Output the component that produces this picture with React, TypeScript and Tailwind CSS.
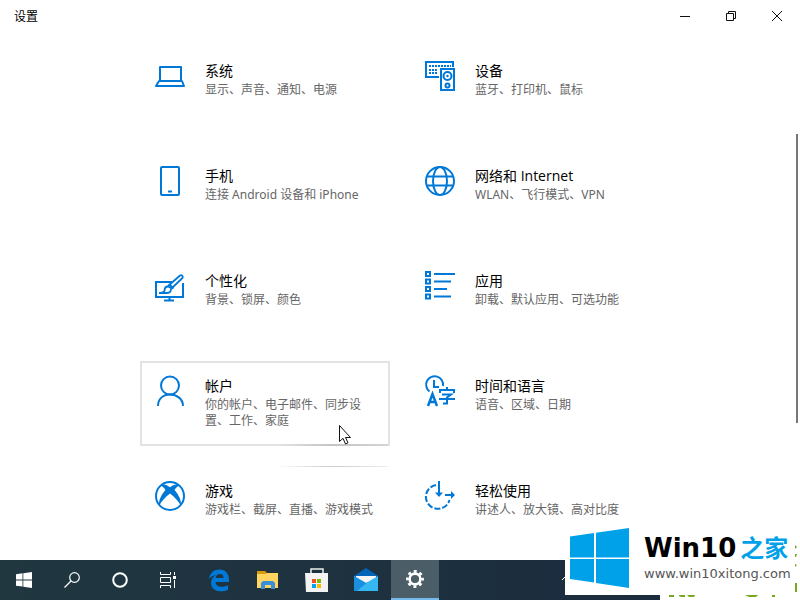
import { ReactNode } from "react";

interface Category {
  title: string;
  description: string;
  icon: ReactNode;
  active?: boolean;
}

function Icon({ children }: { children: ReactNode }) {
  return (
    <svg
      viewBox="0 0 30 30"
      className="size-[30px] shrink-0 overflow-visible"
      fill="none"
      stroke="#0078d7"
      strokeWidth="2"
      aria-hidden="true"
    >
      {children}
    </svg>
  );
}

const categories: Category[] = [
  {
    title: "系统",
    description: "显示、声音、通知、电源",
    icon: (
      <Icon>
        <path d="M5 20V6h21v14M4 20h23l2 5H1l3-5Z" strokeLinejoin="round" />
      </Icon>
    ),
  },
  {
    title: "设备",
    description: "蓝牙、打印机、鼠标",
    icon: (
      <Icon>
        <path d="M14 16H1V1h27v5" />
        <path d="M4 5h22M4 9h9M4 12h9" strokeDasharray="2 1" />
        <path d="M16 8h13v21H16z" />
        <circle cx="22.5" cy="15" r="4" />
        <circle cx="22.5" cy="15" r="1.2" fill="#0078d7" stroke="none" />
        <circle cx="22.5" cy="24.5" r="2" />
      </Icon>
    ),
  },
  {
    title: "手机",
    description: "连接 Android 设备和 iPhone",
    icon: (
      <Icon>
        <rect x="6" y="1" width="18" height="28" rx="1" />
        <path d="M13 25.5h4" />
      </Icon>
    ),
  },
  {
    title: "网络和 Internet",
    description: "WLAN、飞行模式、VPN",
    icon: (
      <Icon>
        <circle cx="15" cy="15" r="14" />
        <ellipse cx="15" cy="15" rx="7" ry="14" />
        <path d="M2 10.5h26M2 19.5h26" />
      </Icon>
    ),
  },
  {
    title: "个性化",
    description: "背景、锁屏、颜色",
    icon: (
      <Icon>
        <path d="M17 11H1v15h27V12M14.5 26v3M9 29.5h10" />
        <path
          d="M4 22h8c3 0 4.500-2 4-5l-3-1.500c-3 0-3.500 3-3.500 4.500-1 1.500-3 2-5.500 2Z"
          strokeWidth="1.800"
        />
        <path
          d="M13 15 25 4.500c1.500-1 3.500.5 2.500 2.500L16.500 17.500M14.500 13.500l4 4"
          strokeWidth="1.800"
        />
      </Icon>
    ),
  },
  {
    title: "应用",
    description: "卸载、默认应用、可选功能",
    icon: (
      <Icon>
        <path d="M1 1h4v4H1zM1 8.500h4v4H1zM1 16h4v4H1zM1 23.500h4v4H1z" />
        <path d="M9 3h21M9 10.500h17M9 18h13M9 25.500h17" />
      </Icon>
    ),
  },
  {
    title: "帐户",
    description: "你的帐户、电子邮件、同步设置、工作、家庭",
    active: true,
    icon: (
      <Icon>
        <circle cx="15" cy="9.500" r="9" />
        <path d="M3 30c0-7 5-11.500 12-11.500S28 23 28 30" />
      </Icon>
    ),
  },
  {
    title: "时间和语言",
    description: "语音、区域、日期",
    icon: (
      <Icon>
        <path d="M4.500 15.500A8.500 8.500 0 1 1 18 10M9 4v7h5" />
        <path d="M3 30 7.500 18 12 30M4.500 26h6" strokeWidth="2.500" />
        <path d="M15 17v-3h14v3M22 11v3M17 18.500h9l-4 3v6h-4M14 23h16" />
      </Icon>
    ),
  },
  {
    title: "游戏",
    description: "游戏栏、截屏、直播、游戏模式",
    icon: (
      <Icon>
        <circle cx="15" cy="15" r="14" />
        <path
          d="M5 4.500c4-2 7-.5 10 1.800 3-2.300 6-3.800 10-1.800-2 .5-4 2-5.500 4.500 3.500 4 7 9 6.500 16-2-4.500-6.500-9-11-12.500C10.500 16 6 20.500 4 25c-.5-7 3-12 6.500-16C9 6.500 7 5 5 4.500Z"
          fill="#0078d7"
          stroke="none"
        />
      </Icon>
    ),
  },
  {
    title: "轻松使用",
    description: "讲述人、放大镜、高对比度",
    icon: (
      <Icon>
        <path d="M11 4A12 12 0 1 0 24.500 19" strokeDasharray="6 2" />
        <path d="M14 0v12M20 14h7" />
        <path d="M10 11.500h8l-4 4.500zM26 10l4 4-4 4z" fill="#0078d7" stroke="none" />
      </Icon>
    ),
  },
];

function TitleBar() {
  return (
    <header className="flex h-8 items-center justify-between pl-[14px] text-xs text-black">
      <h1 className="pt-0.5">设置</h1>
      <div className="flex h-full">
        <button aria-label="最小化" className="flex w-[46px] items-center justify-center">
          <svg className="size-[10px]" viewBox="0 0 10 10" stroke="#111">
            <path d="M0 5.500h10" />
          </svg>
        </button>
        <button aria-label="还原" className="flex w-[46px] items-center justify-center">
          <svg className="size-[10px]" viewBox="0 0 10 10" stroke="#111" fill="none">
            <path d="M.5 2.500h7v7h-7zM2.500 2.500v-2h7v7h-2" />
          </svg>
        </button>
        <button aria-label="关闭" className="flex w-[46px] items-center justify-center">
          <svg className="size-[10px]" viewBox="0 0 10 10" stroke="#111">
            <path d="m0 0 10 10M10 0 0 10" />
          </svg>
        </button>
      </div>
    </header>
  );
}

function CategoryTile({ category }: { category: Category }) {
  return (
    <a
      href="#"
      className={`relative flex min-h-[85px] gap-5 border-2 px-[13px] pt-[13px] ${
        category.active ? "border-[#e3e3e3]" : "border-transparent"
      }`}
    >
      {category.icon}
      <div className="flex-1">
        <h2 className="text-sm leading-5 text-black">{category.title}</h2>
        <p className="pt-px font-['Noto_Sans','Noto_Sans_CJK_SC',sans-serif] text-xs leading-4 text-[#666]">
          {category.description}
        </p>
      </div>
      {category.active && (
        <>
          <span className="absolute -bottom-0.5 right-0 h-0.5 w-28 bg-linear-to-r from-[#e3e3e3] via-[#c4c4c4] to-[#d4d4d4]" />
          <span className="absolute -bottom-[23px] right-0 h-px w-28 bg-linear-to-r from-white via-[#ccc] to-[#eee]" />
          <svg
            className="absolute right-[37px] top-[62px] h-5 w-3"
            viewBox="0 0 12 20"
            fill="#fff"
            stroke="#111"
          >
            <path d="M.5.500v16l3.500-3.200 2.500 5.700 2.500-1.200-2.500-5.300h5Z" />
          </svg>
        </>
      )}
    </a>
  );
}

const apps: { label: string; icon: ReactNode }[] = [
  {
    label: "Edge",
    icon: (
      <svg className="size-6" viewBox="0 0 24 24" fill="#0078d7">
        <path d="M2 11C3 4.500 7 1.500 12.500 1.500 19 1.500 22 6 22 11.500V14H8.500c.3 3.500 3 4.800 6.500 4.800 2.500 0 4.500-.6 6-1.500v4.500c-2 1-4.300 1.500-7 1.500-6 0-10-3.300-10-8.300 0-4 2.200-6.700 5.500-8.200C5.800 7.500 3.700 9 2 11Zm6.700-1h7.800c0-2.500-1.300-4-3.700-4-2.300 0-3.800 1.600-4.100 4Z" />
      </svg>
    ),
  },
  {
    label: "文件资源管理器",
    icon: (
      <svg className="size-6" viewBox="0 0 24 24">
        <path d="M1 3h8l2 2h11v4H1z" fill="#d99a0b" />
        <path d="M1 6h9l1-1h11v15H1z" fill="#ffd460" />
        <path d="M5 21v-6l2-2h10l2 2v6h-4v-4H9v4z" fill="#3a8fdc" />
      </svg>
    ),
  },
  {
    label: "Microsoft Store",
    icon: (
      <svg className="size-6" viewBox="0 0 24 24">
        <path d="M6 6V1h12v5" fill="none" stroke="#eee" strokeWidth="1.500" />
        <path d="M0 5h23v19H1z" fill="#f3f3f3" />
        <path d="M7 11h4v4H7z" fill="#f25022" />
        <path d="M12 11h4v4h-4z" fill="#7fba00" />
        <path d="M7 16h4v4H7z" fill="#00a4ef" />
        <path d="M12 16h4v4h-4z" fill="#ffb900" />
      </svg>
    ),
  },
  {
    label: "邮件",
    icon: (
      <svg className="size-6" viewBox="0 0 24 24">
        <path d="M0 8 12 0l12 8v5H0z" fill="#0364b8" />
        <path d="M2 8h20v4l-10 6-10-6z" fill="#f5f5f5" />
        <path d="M0 8v15h24V8l-12 7z" fill="#35b8f1" />
        <path d="M0 8v15h3l12-10-3 2z" fill="#1a8fe0" />
      </svg>
    ),
  },
];

function Taskbar() {
  return (
    <nav
      aria-label="任务栏"
      className="mr-[140px] flex h-10 bg-linear-to-r from-[#203740] to-[#1b2c3e]"
    >
      <button aria-label="开始" className="flex w-12 items-center justify-center">
        <svg className="size-4" viewBox="0 0 16 16" fill="#fff">
          <path d="M0 2.200 6.500 1.300v6.200H0zM7.300 1.200 16 0v7.500H7.300zM0 8.400h6.500v6.200L0 13.700zM7.300 8.400H16V16l-8.700-1.200z" />
        </svg>
      </button>
      <button aria-label="搜索" className="flex w-12 items-center justify-center">
        <svg className="size-4" viewBox="0 0 16 16" fill="none" stroke="#fff" strokeWidth="1.200">
          <circle cx="10.500" cy="5.500" r="4.800" />
          <path d="M7 9 .5 15.500" />
        </svg>
      </button>
      <button aria-label="Cortana" className="flex w-12 items-center justify-center">
        <svg className="size-4" viewBox="0 0 16 16" fill="none" stroke="#fff" strokeWidth="2">
          <circle cx="8" cy="8" r="6.800" />
        </svg>
      </button>
      <button aria-label="任务视图" className="mr-[3px] flex w-12 items-center justify-center">
        <svg className="size-4" viewBox="0 0 16 16" fill="none" stroke="#fff">
          <path d="M.5 0v2.500h10V0M.5 5.500h10v5H.5zM.5 16v-2.500h10V16M14.500 0v3M14.500 8v8" />
          <path d="M13 4h3v3h-3z" fill="#fff" stroke="none" />
        </svg>
      </button>
      <div className="flex gap-px">
        {apps.map((app) => (
          <button
            key={app.label}
            aria-label={app.label}
            className="flex w-12 items-center justify-center"
          >
            {app.icon}
          </button>
        ))}
        <button
          aria-label="设置"
          className="flex w-12 items-center justify-center border-b-2 border-[#76b9ed] bg-[#4b5d67]"
        >
          <svg className="size-[18px]" viewBox="0 0 18 18" fill="none" stroke="#fff">
            <circle cx="9" cy="9" r="5.400" strokeWidth="2.600" />
            <circle
              cx="9"
              cy="9"
              r="7.600"
              strokeWidth="2.600"
              strokeDasharray="2.980 2.988"
              strokeDashoffset="1.500"
            />
          </svg>
        </button>
      </div>
    </nav>
  );
}

function SiteBadge() {
  return (
    <div className="absolute right-0 bottom-0 w-[235px]">
      <svg className="absolute -left-[3px] top-[53px] size-2" viewBox="0 0 8 8" stroke="#fff">
        <path d="M0 7 4 3" />
      </svg>
      <div className="flex h-[75px] items-center gap-[14px] bg-white pl-[5px]">
        <svg className="size-[60px] shrink-0" viewBox="0 0 60 60" fill="#00a1e9">
          <path d="M0 8.500 24 5v24.500H0zM26 4.700 59 0v29.500H26zM0 31h24v23.500L0 51zM26 31h33v29l-33-5z" />
        </svg>
        <div className="whitespace-nowrap">
          <div className="flex items-center gap-1 leading-7 font-bold">
            <span className="font-['DejaVu_Sans',sans-serif] text-[26px] text-black">Win10</span>
            <span className="text-2xl text-[#00a1e9]">之家</span>
          </div>
          <div className="font-['DejaVu_Sans',sans-serif] text-[13px] leading-5 text-[#555]">
            www.win10xitong.com
          </div>
        </div>
      </div>
      {/* leaves peeking out from behind the badge */}
      <svg className="ml-auto h-[5px] w-[140px] overflow-visible" viewBox="0 0 140 5" fill="#78a81e">
        <path d="M9 0h5v2H9zM19 0h6v2h-4l-2-1zM27 0h8l-1 2h-5zM85 0h13l-2 2h-7zM112 0h3v2h-3z" />
        <path d="M135-50l2 2-2 2zM135-41h2l-1 3h-1zM135-31l2 1-2 2zM135-12h2v9h-2z" />
      </svg>
    </div>
  );
}

export default function App() {
  return (
    <div className="relative flex min-h-screen flex-col bg-white font-['Open_Sans','Noto_Sans_CJK_SC',sans-serif]">
      <TitleBar />
      <main className="flex-1 pt-[14px] pb-2">
        <div className="mx-auto grid max-w-[520px] grid-cols-2 gap-5">
          {categories.map((category) => (
            <CategoryTile key={category.title} category={category} />
          ))}
        </div>
      </main>
      <div className="absolute right-0 top-[134px] h-[289px] w-1 border-l-2 border-[#777] bg-white" />
      <Taskbar />
      <SiteBadge />
    </div>
  );
}
